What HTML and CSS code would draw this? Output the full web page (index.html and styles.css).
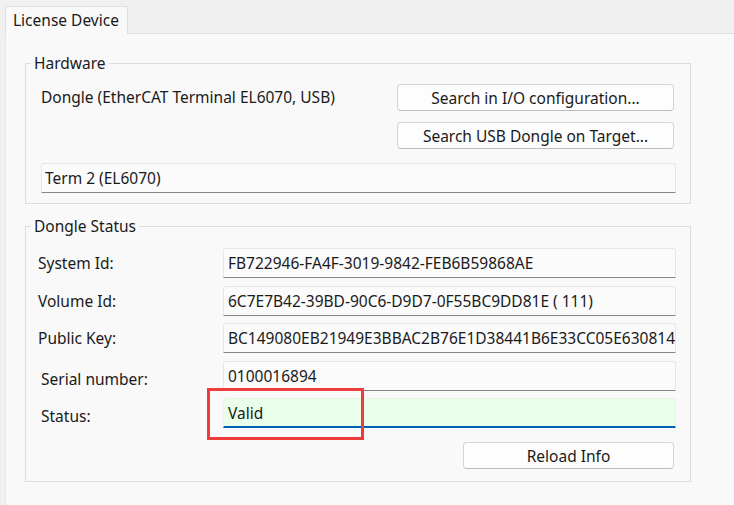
FILE: index.html
```html
<!DOCTYPE html>
<html>
<head>
<meta charset="utf-8">
<link rel="stylesheet" href="styles.css">
</head>
<body>
<div class="tabs">
  <div class="tab">License Device</div>
</div>
<div class="pane">
  <div class="group hw">
    <span class="group-title">Hardware</span>
    <div class="hw-row">
      <div class="hw-label">Dongle (EtherCAT Terminal EL6070, USB)</div>
      <div class="hw-buttons">
        <button class="btn">Search in I/O configuration...</button>
        <button class="btn">Search USB Dongle on Target...</button>
      </div>
    </div>
    <div class="field term">Term 2 (EL6070)</div>
  </div>
  <div class="group ds">
    <span class="group-title">Dongle Status</span>
    <div class="rows">
      <div class="label">System Id:</div>
      <div class="field">FB722946-FA4F-3019-9842-FEB6B59868AE</div>
      <div class="label">Volume Id:</div>
      <div class="field">6C7E7B42-39BD-90C6-D9D7-0F55BC9DD81E ( 111)</div>
      <div class="label">Public Key:</div>
      <div class="field">BC149080EB21949E3BBAC2B76E1D38441B6E33CC05E630814</div>
      <div class="label indent">Serial number:</div>
      <div class="field">0100016894</div>
      <div class="label indent">Status:</div>
      <div class="field status">Valid</div>
    </div>
    <div class="reload-row">
      <button class="btn reload">Reload Info</button>
    </div>
    <div class="highlight"></div>
  </div>
</div>
</body>
</html>
```
FILE: styles.css
```css
* { box-sizing: border-box; }
html, body { margin: 0; height: 100%; }
body {
  background: #f0f0f0;
  font-family: "Noto Sans", "Open Sans", sans-serif;
  font-size: 15.5px;
  color: #1a1a1a;
  display: flex;
  flex-direction: column;
  overflow: hidden;
}
.tabs {
  display: flex;
  padding: 6px 0 0 5px;
  height: 34px;
  position: relative;
  z-index: 1;
}
.tab {
  width: 123px;
  height: 28px;
  background: #f9f9f9;
  border: 1px solid #e0e0e0;
  border-bottom: none;
  padding-left: 7px;
  line-height: 26px;
  white-space: nowrap;
}
.pane {
  flex: 1;
  margin-left: 5px;
  margin-top: -1px;
  background: #f9f9f9;
  border-top: 1px solid #e0e0e0;
  border-left: 1px solid #e6e6e6;
  padding: 29px 0 0 19px;
}
.group {
  position: relative;
  width: 666px;
  border: 1px solid #dcdcdc;
}
.group-title {
  position: absolute;
  top: -11px;
  left: 5px;
  padding: 0 3px;
  background: #f9f9f9;
  line-height: 20px;
  white-space: nowrap;
}
.hw {
  height: 141px;
  padding: 20px 14px 0 15px;
}
.hw-row {
  display: flex;
  justify-content: space-between;
  align-items: flex-start;
}
.hw-label {
  line-height: 27px;
  white-space: nowrap;
}
.hw-buttons {
  display: flex;
  flex-direction: column;
  gap: 11px;
  width: 277px;
  margin-right: 2px;
}
.btn {
  font: inherit;
  color: #1a1a1a;
  height: 27px;
  padding: 0;
  background: #fdfdfd;
  border: 1px solid #d4d4d4;
  border-bottom-color: #bcbcbc;
  border-radius: 4px;
  line-height: 24px;
}
.field {
  height: 30px;
  background: #fbfbfb;
  border: 1px solid #e6e6e6;
  border-bottom: 1px solid #868686;
  border-radius: 3px 3px 0 0;
  padding-left: 4px;
  line-height: 28px;
  white-space: nowrap;
  overflow: hidden;
}
.term {
  margin-top: 14px;
  padding-left: 3px;
}
.ds {
  margin-top: 22px;
  height: 256px;
  padding: 21px 14px 0 12px;
}
.rows {
  display: grid;
  grid-template-columns: 185px 1fr;
  row-gap: 7.5px;
  align-items: center;
}
.label {
  white-space: nowrap;
  height: 30px;
  line-height: 30px;
}
.label.indent {
  padding-left: 3px;
  line-height: 36px;
}
.status {
  background: #eaffea;
  border-color: #e6f5e6;
  border-bottom: 2px solid #005fb8;
}
.reload-row {
  display: flex;
  justify-content: flex-end;
  margin-top: 14px;
}
.reload {
  width: 211px;
  margin-right: 2px;
}
.highlight {
  position: absolute;
  left: 181px;
  top: 161px;
  width: 157px;
  height: 52px;
  border: 3px solid #ee3b3b;
  pointer-events: none;
}
```
